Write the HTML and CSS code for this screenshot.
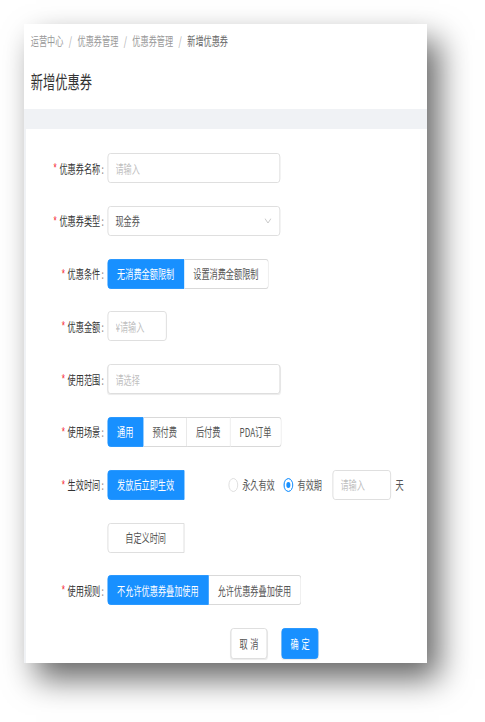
FILE: index.html
```html
<!DOCTYPE html>
<html lang="zh-CN">
<head>
<meta charset="utf-8">
<title>新增优惠券</title>
<link rel="stylesheet" href="styles.css">
</head>
<body>
<div class="frame">
  <div class="canvas">
    <header class="page-header">
      <nav class="crumbs">
        <span class="crumb">运营中心</span><span class="sep">/</span>
        <span class="crumb">优惠券管理</span><span class="sep">/</span>
        <span class="crumb">优惠券管理</span><span class="sep">/</span>
        <span class="crumb current">新增优惠券</span>
      </nav>
      <h1 class="title">新增优惠券</h1>
    </header>
    <div class="band"></div>
    <form class="form">
      <div class="row">
        <label class="label"><span class="req">*</span>优惠券名称<span class="colon">:</span></label>
        <input class="field w-lg" placeholder="请输入">
      </div>
      <div class="row">
        <label class="label"><span class="req">*</span>优惠券类型<span class="colon">:</span></label>
        <div class="select w-lg">
          <span class="value">现金券</span>
          <svg class="arrow" width="10" height="6" viewBox="0 0 10 6"><polyline points="0.5,0.5 5,5 9.5,0.5" fill="none" stroke="#bfbfbf" stroke-width="1"/></svg>
        </div>
      </div>
      <div class="row">
        <label class="label"><span class="req">*</span>优惠条件<span class="colon">:</span></label>
        <div class="seg">
          <button type="button" class="seg-btn on">无消费金额限制</button>
          <button type="button" class="seg-btn">设置消费金额限制</button>
        </div>
      </div>
      <div class="row">
        <label class="label"><span class="req">*</span>优惠金额<span class="colon">:</span></label>
        <input class="field w-sm" placeholder="¥请输入">
      </div>
      <div class="row">
        <label class="label"><span class="req">*</span>使用范围<span class="colon">:</span></label>
        <input class="field w-lg scope" placeholder="请选择">
      </div>
      <div class="row">
        <label class="label"><span class="req">*</span>使用场景<span class="colon">:</span></label>
        <div class="seg">
          <button type="button" class="seg-btn on">通用</button>
          <button type="button" class="seg-btn">预付费</button>
          <button type="button" class="seg-btn">后付费</button>
          <button type="button" class="seg-btn">PDA订单</button>
        </div>
      </div>
      <div class="row tall">
        <label class="label line"><span class="req">*</span>生效时间<span class="colon">:</span></label>
        <div class="stack">
          <button type="button" class="seg-btn on">发放后立即生效</button>
          <button type="button" class="seg-btn">自定义时间</button>
        </div>
        <div class="radios">
          <span class="radio"><span class="dot"></span>永久有效</span>
          <span class="radio on"><span class="dot"></span>有效期</span>
          <input class="field w-days" placeholder="请输入">
          <span class="unit">天</span>
        </div>
      </div>
      <div class="row">
        <label class="label"><span class="req">*</span>使用规则<span class="colon">:</span></label>
        <div class="seg">
          <button type="button" class="seg-btn on">不允许优惠券叠加使用</button>
          <button type="button" class="seg-btn">允许优惠券叠加使用</button>
        </div>
      </div>
      <div class="actions">
        <button type="button" class="btn"><span>取消</span></button>
        <button type="button" class="btn primary"><span>确定</span></button>
      </div>
    </form>
  </div>
</div>
</body>
</html>
```
FILE: styles.css
```css
* { box-sizing: border-box; }
html, body { margin: 0; padding: 0; background: #fff; }
body {
  min-height: 722px;
  padding: 24px 0 60px 24px;
  font-family: "Noto Sans CJK SC", "Noto Sans", sans-serif;
  font-size: 12px;
  color: rgba(0, 0, 0, .85);
}

.frame {
  width: 403px;
  overflow: hidden;
  background: #f0f2f5;
  box-shadow: 12px 16px 30px rgba(0, 0, 0, .6);
}
.canvas {
  width: 593px;
  transform: scaleX(0.6796);
  transform-origin: 0 0;
}

/* header */
.page-header {
  background: #fff;
  height: 85px;
  padding: 9px 0 0 10px;
}
.crumbs {
  display: flex;
  align-items: center;
  height: 16px;
  line-height: 16px;
  color: #999;
}
.sep { margin: 0 8px; color: #aaa; }
.current { color: #666; }
.title {
  margin: 19px 0 0;
  font-size: 18px;
  font-weight: 400;
  line-height: 26px;
  color: #333;
}
.band { height: 20px; }

/* form */
.form {
  margin: 0 0 0 3px;
  background: #fff;
  padding: 24px 0 5px;
}
.row {
  display: flex;
  align-items: center;
  height: 30px;
  margin-bottom: 22.8px;
}
.row.tall { height: auto; align-items: flex-start; }
.label {
  flex: 0 0 119.5px;
  display: flex;
  justify-content: flex-end;
  align-items: center;
  white-space: nowrap;
  color: #333;
}
.label.line { height: 30px; }
.req {
  color: #f5222d;
  margin-right: 4px;
  font-family: "Liberation Sans", sans-serif;
}
.colon { margin: 0 5px 0 2px; color: #888; }

.field {
  display: block;
  height: 30px;
  border: 1px solid #d9d9d9;
  border-radius: 4px;
  padding: 0 11px;
  font: inherit;
  color: rgba(0, 0, 0, .65);
  background: #fff;
  outline: none;
}
.field::placeholder { color: #bfbfbf; }
.w-lg { width: 254px; }
.w-sm { width: 87px; }
.w-days { width: 86px; margin-left: 15px; }
.scope { box-shadow: 0 1px 1px rgba(0, 0, 0, .08); }

.select {
  display: flex;
  align-items: center;
  justify-content: space-between;
  height: 30px;
  border: 1px solid #d9d9d9;
  border-radius: 4px;
  padding: 0 12px 0 11px;
  color: #555;
}
.arrow { display: block; }

.seg { display: flex; }
.seg-btn {
  height: 30px;
  padding: 0 13.5px;
  border: 1px solid #d9d9d9;
  border-left-width: 0;
  background: #fff;
  font: inherit;
  color: #555;
  white-space: nowrap;
}
.seg-btn:first-child { border-left-width: 1px; border-radius: 4px 0 0 4px; }
.seg-btn:last-child { border-radius: 0 4px 4px 0; }
.seg-btn.on { background: #1890ff; border-color: #1890ff; color: #fff; }

.stack {
  display: flex;
  flex-direction: column;
  gap: 22.8px;
}
.stack .seg-btn,
.stack .seg-btn:last-child {
  width: 113px;
  padding: 0;
  border-left-width: 1px;
  border-radius: 4px 0 0 4px;
}

.radios {
  display: flex;
  align-items: center;
  height: 30px;
  margin-left: 65px;
}
.radio {
  display: flex;
  align-items: center;
  color: #555;
  white-space: nowrap;
}
.radio + .radio { margin-left: 13px; }
.dot {
  width: 14px;
  height: 14px;
  border: 1px solid #d9d9d9;
  border-radius: 50%;
  margin-right: 6.5px;
  background: #fff;
}
.radio.on .dot {
  border-color: #1890ff;
  background: #1890ff;
  box-shadow: inset 0 0 0 3px #fff;
}
.unit { margin-left: 7px; color: #555; }

.actions {
  display: flex;
  gap: 21px;
  padding-left: 301px;
  height: 30px;
}
.btn {
  flex: 0 0 auto;
  height: 30.5px;
  padding: 0 12px;
  border: 1px solid #d9d9d9;
  border-radius: 4px;
  background: #fff;
  font: inherit;
  color: #555;
  white-space: nowrap;
  box-shadow: 0 1px 1px rgba(0, 0, 0, .08);
}
.btn span { display: inline-block; letter-spacing: .34em; margin-right: -.34em; }
.btn.primary { background: #1890ff; border-color: #1890ff; color: #fff; }
```
